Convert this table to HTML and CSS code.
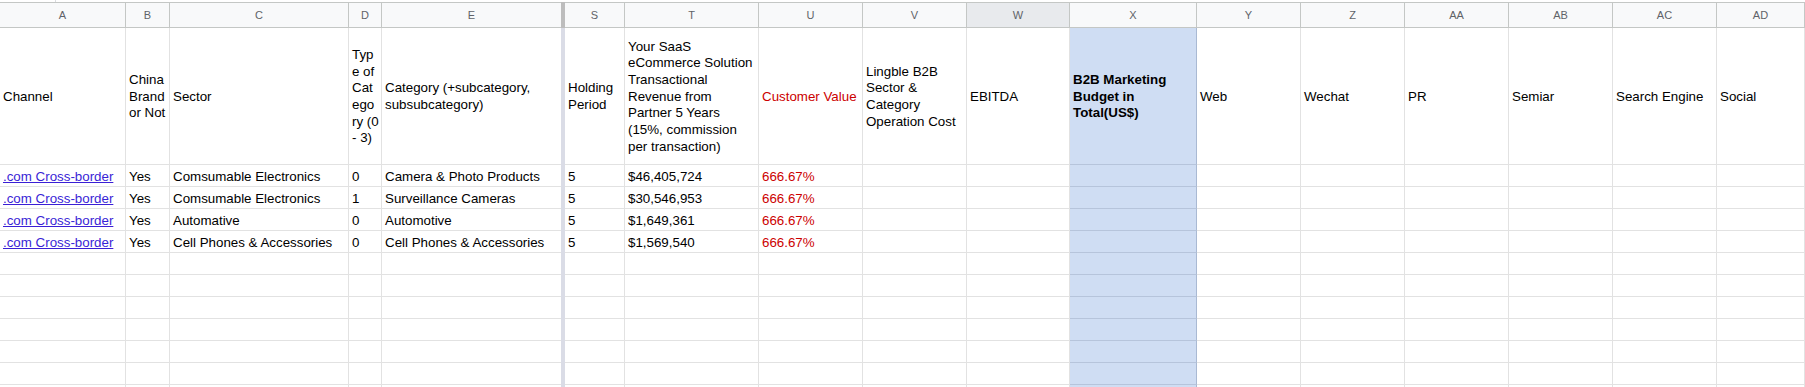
FILE: index.html
```html
<!DOCTYPE html>
<html>
<head>
<meta charset="utf-8">
<link rel="stylesheet" href="styles.css">
</head>
<body>
<div class="topstrip"><span class="tick"></span></div>
<div class="sheet">
  <!-- column headers -->
  <div class="ch">A</div><div class="ch">B</div><div class="ch">C</div><div class="ch">D</div><div class="ch noright">E</div>
  <div class="fz fzh"></div>
  <div class="ch">S</div><div class="ch">T</div><div class="ch">U</div><div class="ch">V</div><div class="ch hover">W</div>
  <div class="ch">X</div><div class="ch">Y</div><div class="ch">Z</div><div class="ch">AA</div><div class="ch">AB</div><div class="ch">AC</div><div class="ch">AD</div>

  <!-- row 1: titles -->
  <div class="c h">Channel</div>
  <div class="c h">China<br>Brand<br>or Not</div>
  <div class="c h">Sector</div>
  <div class="c h">Typ<br>e of<br>Cat<br>ego<br>ry (0<br>- 3)</div>
  <div class="c h noright">Category (+subcategory,<br>subsubcategory)</div>
  <div class="fz"></div>
  <div class="c h">Holding<br>Period</div>
  <div class="c h">Your SaaS<br>eCommerce Solution<br>Transactional<br>Revenue from<br>Partner 5 Years<br>(15%, commission<br>per transaction)</div>
  <div class="c h red">Customer Value</div>
  <div class="c h">Lingble B2B<br>Sector &amp;<br>Category<br>Operation Cost</div>
  <div class="c h">EBITDA</div>
  <div class="c h x bold">B2B Marketing<br>Budget in<br>Total(US$)</div>
  <div class="c h">Web</div>
  <div class="c h">Wechat</div>
  <div class="c h">PR</div>
  <div class="c h">Semiar</div>
  <div class="c h">Search Engine</div>
  <div class="c h">Social</div>

  <!-- data rows -->
  <div class="c"><a class="link">.com Cross-border</a></div><div class="c">Yes</div><div class="c">Comsumable Electronics</div><div class="c">0</div><div class="c noright">Camera &amp; Photo Products</div>
  <div class="fz"></div>
  <div class="c">5</div><div class="c">$46,405,724</div><div class="c red">666.67%</div><div class="c"></div><div class="c"></div><div class="c x"></div><div class="c"></div><div class="c"></div><div class="c"></div><div class="c"></div><div class="c"></div><div class="c"></div>

  <div class="c"><a class="link">.com Cross-border</a></div><div class="c">Yes</div><div class="c">Comsumable Electronics</div><div class="c">1</div><div class="c noright">Surveillance Cameras</div>
  <div class="fz"></div>
  <div class="c">5</div><div class="c">$30,546,953</div><div class="c red">666.67%</div><div class="c"></div><div class="c"></div><div class="c x"></div><div class="c"></div><div class="c"></div><div class="c"></div><div class="c"></div><div class="c"></div><div class="c"></div>

  <div class="c"><a class="link">.com Cross-border</a></div><div class="c">Yes</div><div class="c">Automative</div><div class="c">0</div><div class="c noright">Automotive</div>
  <div class="fz"></div>
  <div class="c">5</div><div class="c">$1,649,361</div><div class="c red">666.67%</div><div class="c"></div><div class="c"></div><div class="c x"></div><div class="c"></div><div class="c"></div><div class="c"></div><div class="c"></div><div class="c"></div><div class="c"></div>

  <div class="c"><a class="link">.com Cross-border</a></div><div class="c">Yes</div><div class="c">Cell Phones &amp; Accessories</div><div class="c">0</div><div class="c noright">Cell Phones &amp; Accessories</div>
  <div class="fz"></div>
  <div class="c">5</div><div class="c">$1,569,540</div><div class="c red">666.67%</div><div class="c"></div><div class="c"></div><div class="c x"></div><div class="c"></div><div class="c"></div><div class="c"></div><div class="c"></div><div class="c"></div><div class="c"></div>

  <div class="c"></div><div class="c"></div><div class="c"></div><div class="c"></div><div class="c noright"></div><div class="fz"></div><div class="c"></div><div class="c"></div><div class="c"></div><div class="c"></div><div class="c"></div><div class="c x"></div><div class="c"></div><div class="c"></div><div class="c"></div><div class="c"></div><div class="c"></div><div class="c"></div>
  <div class="c"></div><div class="c"></div><div class="c"></div><div class="c"></div><div class="c noright"></div><div class="fz"></div><div class="c"></div><div class="c"></div><div class="c"></div><div class="c"></div><div class="c"></div><div class="c x"></div><div class="c"></div><div class="c"></div><div class="c"></div><div class="c"></div><div class="c"></div><div class="c"></div>
  <div class="c"></div><div class="c"></div><div class="c"></div><div class="c"></div><div class="c noright"></div><div class="fz"></div><div class="c"></div><div class="c"></div><div class="c"></div><div class="c"></div><div class="c"></div><div class="c x"></div><div class="c"></div><div class="c"></div><div class="c"></div><div class="c"></div><div class="c"></div><div class="c"></div>
  <div class="c"></div><div class="c"></div><div class="c"></div><div class="c"></div><div class="c noright"></div><div class="fz"></div><div class="c"></div><div class="c"></div><div class="c"></div><div class="c"></div><div class="c"></div><div class="c x"></div><div class="c"></div><div class="c"></div><div class="c"></div><div class="c"></div><div class="c"></div><div class="c"></div>
  <div class="c"></div><div class="c"></div><div class="c"></div><div class="c"></div><div class="c noright"></div><div class="fz"></div><div class="c"></div><div class="c"></div><div class="c"></div><div class="c"></div><div class="c"></div><div class="c x"></div><div class="c"></div><div class="c"></div><div class="c"></div><div class="c"></div><div class="c"></div><div class="c"></div>
  <div class="c"></div><div class="c"></div><div class="c"></div><div class="c"></div><div class="c noright"></div><div class="fz"></div><div class="c"></div><div class="c"></div><div class="c"></div><div class="c"></div><div class="c"></div><div class="c x"></div><div class="c"></div><div class="c"></div><div class="c"></div><div class="c"></div><div class="c"></div><div class="c"></div>
  <div class="c"></div><div class="c"></div><div class="c"></div><div class="c"></div><div class="c noright"></div><div class="fz"></div><div class="c"></div><div class="c"></div><div class="c"></div><div class="c"></div><div class="c"></div><div class="c x"></div><div class="c"></div><div class="c"></div><div class="c"></div><div class="c"></div><div class="c"></div><div class="c"></div>
</div>
</body>
</html>
```

FILE: styles.css
```css
* { box-sizing: border-box; }
html, body {
  margin: 0;
  padding: 0;
  background: #ffffff;
  overflow: hidden;
  width: 1805px;
  height: 387px;
}
body {
  font-family: "Liberation Sans", Arial, sans-serif;
  font-size: 13.33px;
  color: #000;
}
.topstrip {
  height: 2px;
  position: relative;
}
.tick {
  position: absolute;
  left: 55px;
  top: 0;
  width: 1px;
  height: 2px;
  background: #dadce0;
}
.sheet {
  display: grid;
  grid-template-columns: 126px 44px 179px 33px 179px 4px 60px 134px 104px 104px 103px 127px 104px 104px 104px 104px 104px 88px;
  grid-template-rows: 26px 137px repeat(11, 22px);
  height: 385px;
  overflow: hidden;
}
.ch {
  background: #f8f9fa;
  border-top: 1px solid #c4c7c5;
  border-bottom: 1px solid #c4c7c5;
  border-right: 1px solid #c4c7c5;
  color: #5f6368;
  font-size: 11px;
  display: flex;
  align-items: center;
  justify-content: center;
}
.ch.hover { background: #e8eaed; }
.ch.noright { border-right: none; }
.fz {
  background: #dadce6;
}
.fz.fzh {
  background: #bdbdbd;
}
.c {
  border-right: 1px solid #e2e2e2;
  border-bottom: 1px solid #e2e2e2;
  padding: 0 3px 1px 3px;
  line-height: 16px;
  white-space: nowrap;
  overflow: hidden;
  display: flex;
  align-items: flex-end;
}
.c.noright { border-right: none; }
.c.h {
  align-items: center;
  line-height: 16.67px;
  padding: 2px 3px 0 3px;
}
.c.x {
  background: #cfddf3;
  border-bottom-color: #b6c4db;
  border-right-color: #a9b9d3;
}
.bold { font-weight: bold; }
.red { color: #cc0000; }
.link {
  color: #3a1fd6;
  text-decoration: underline;
}
```
